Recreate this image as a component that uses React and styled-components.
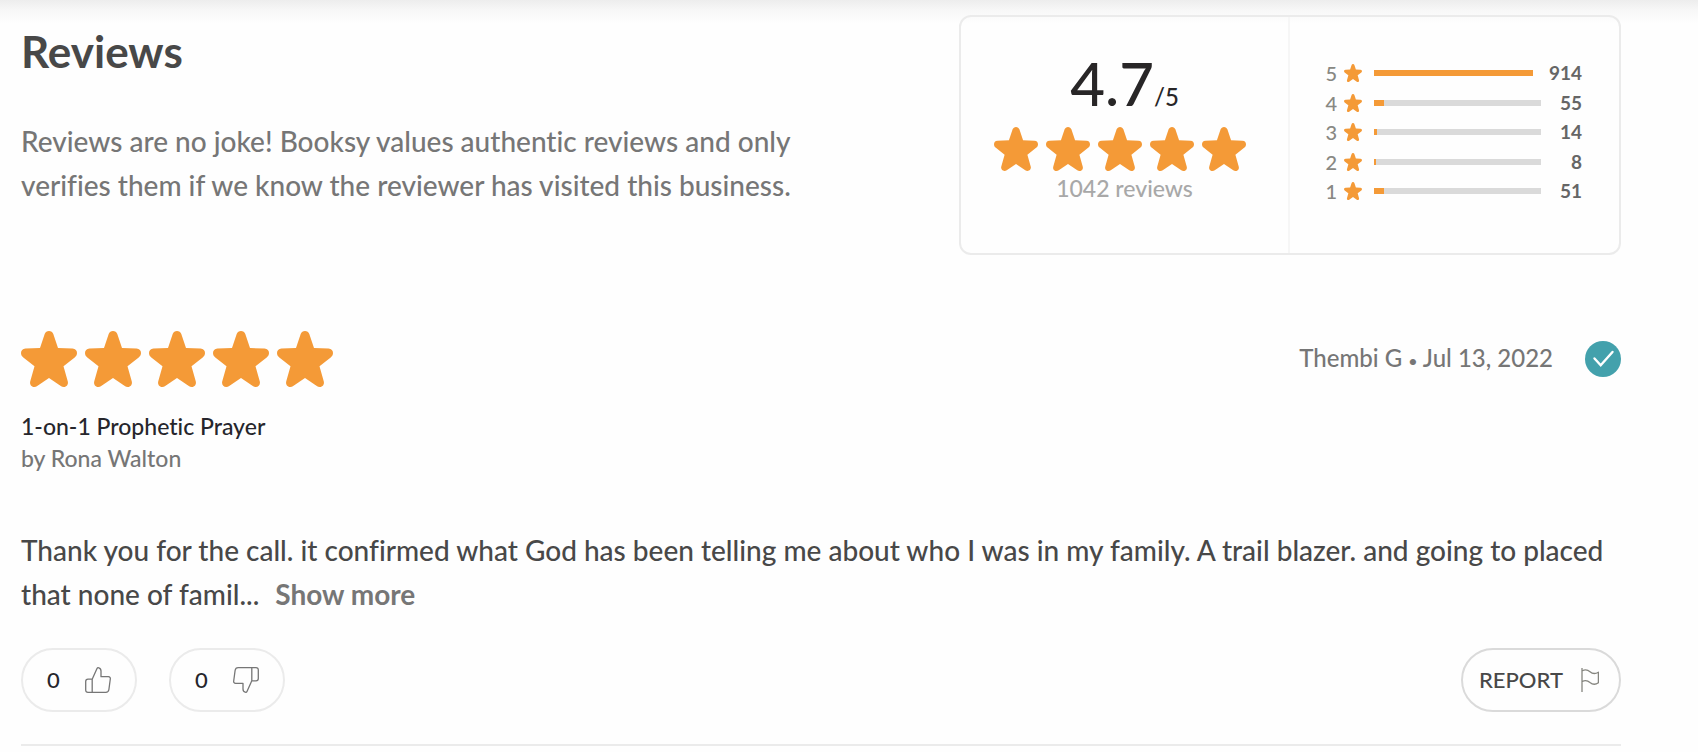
import React from 'react';
import styled, { createGlobalStyle } from 'styled-components';

const GlobalStyle = createGlobalStyle`
  * {
    box-sizing: border-box;
  }
  body {
    margin: 0;
    background: #fefefe;
    font-family: Lato, "Open Sans", sans-serif;
    font-weight: 500;
    font-variant-ligatures: none;
    color: #484848;
  }
  h2, p, ul {
    margin: 0;
    padding: 0;
  }
  button {
    font-family: inherit;
    cursor: pointer;
  }
`;

const Page = styled.main`
  background: linear-gradient(#ededed, #f8f8f8 45%, #fefefe) no-repeat;
  background-size: 100% 24px;
  padding: 15px 77px 0 21px;
`;

const Top = styled.header`
  display: flex;
  justify-content: space-between;
  align-items: flex-start;
  gap: 80px;
`;

const Intro = styled.div`
  flex: 1;
  padding-top: 10px;
  max-width: 820px;
`;

const Title = styled.h2`
  font-size: 44px;
  line-height: 52px;
  font-weight: 700;
  color: #484848;
`;

const Text = styled.p`
  font-size: 28px;
  line-height: 44px;
  color: ${({ $muted }) => ($muted ? '#767676' : '#484848')};
`;

const IntroText = styled(Text)`
  margin-top: 42px;
`;

const Summary = styled.section`
  display: flex;
  flex: 0 0 662px;
  height: 240px;
  border: 2px solid #ebebeb;
  border-radius: 12px;
`;

const Score = styled.div`
  width: 50%;
  display: flex;
  flex-direction: column;
  align-items: center;
  padding-top: 30px;
  border-right: 2px solid #f6f6f6;
`;

const Average = styled.p`
  font-size: 60px;
  line-height: 72px;
  font-weight: 500;
  color: #282627;
  small {
    font-size: 24px;
    line-height: 28px;
  }
`;

const Stars = styled.div`
  display: flex;
  padding-right: ${({ $padded }) => ($padded ? '10px' : '0')};
  margin-top: ${({ $padded }) => ($padded ? '8px' : '0')};
  gap: 8px;
`;

const Total = styled.p`
  font-size: 23px;
  line-height: 32px;
  margin-top: 1px;
  color: #a8a8a8;
`;

const Breakdown = styled.ul`
  width: 50%;
  list-style: none;
  display: flex;
  flex-direction: column;
  justify-content: space-between;
  height: 140px;
  margin-top: 45px;
  padding: 0 37px 0 35px;
`;

const Row = styled.li`
  display: flex;
  align-items: center;
  height: 22px;
  font-size: 20px;
  line-height: 22px;
  color: #888883;
  svg {
    margin: 0 12px 0 7px;
  }
  strong {
    min-width: 25px;
    margin-left: 16px;
    font-size: 19px;
    text-align: right;
    font-weight: 700;
    color: #666;
  }
`;

const Label = styled.span`
  width: 12px;
  text-align: right;
`;

const Track = styled.div`
  flex: 1;
  height: 6px;
  background: #dadada;
`;

const Fill = styled.div`
  height: 100%;
  background: #f49a37;
`;

const Review = styled.article`
  margin-top: 76px;
  padding-bottom: 32px;
  border-bottom: 2px solid #ebebeb;
`;

const ReviewTop = styled.div`
  display: flex;
  justify-content: space-between;
  align-items: center;
`;

const Author = styled.div`
  display: flex;
  align-items: center;
  gap: 32px;
  font-size: 24px;
  line-height: 32px;
  color: #767676;
  small {
    font-size: 16px;
  }
`;

const Service = styled.p`
  font-size: 23px;
  line-height: 32px;
  color: ${({ $muted }) => ($muted ? '#767676' : '#26262c')};
`;

const Services = styled.div`
  margin: 23px 0 54px;
`;

const ShowMore = styled.button`
  margin-left: 16px;
  padding: 0;
  border: 0;
  background: none;
  font-size: 28px;
  line-height: 32px;
  font-weight: 700;
  color: #767676;
`;

const Actions = styled.div`
  display: flex;
  gap: 32px;
  margin-top: 32px;
`;

const Pill = styled.button`
  display: flex;
  align-items: center;
  justify-content: space-between;
  width: 116px;
  height: 64px;
  padding: 0 24px;
  border: 2px solid #ebebeb;
  border-radius: 32px;
  background: #fefefe;
  font-size: 22px;
  line-height: 28px;
  font-weight: 500;
  color: #26262c;
`;

const ReportPill = styled(Pill)`
  width: 160px;
  padding: 0 20px 0 16px;
  margin-left: auto;
  border-color: #dadada;
  color: #484848;
`;

const Star = ({ size }) => (
  <svg width={size} height={size} viewBox="0 0 56 56" fill="#f49a37" aria-hidden="true">
    <path d="M28 0C30 0 31.6 1.2 32.3 3L37 17L51.5 17.6C54.5 17.8 56 19.6 56 22C56 23.8 55.2 25.2 54 26.2L42.5 35.3L46.8 50.5C47.5 53.5 45.5 56 42.8 56C41.6 56 40.6 55.6 39.8 55L28 47L16.2 55C15.4 55.6 14.4 56 13.2 56C10.5 56 8.5 53.5 9.2 50.5L13.5 35.3L2 26.2C.8 25.2 0 23.8 0 22C0 19.6 1.5 17.8 4.5 17.6L19 17L23.7 3C24.4 1.2 26 0 28 0Z" />
  </svg>
);

const StarRow = ({ size, padded }) => (
  <Stars $padded={padded} role="img" aria-label="5 stars">
    {[1, 2, 3, 4, 5].map((n) => <Star key={n} size={size} />)}
  </Stars>
);

const Thumb = ({ down }) => (
  <svg width="26" height="26" viewBox="0 0 26 26" fill="none" stroke="#767676" strokeWidth="1.3" strokeLinejoin="round" aria-hidden="true">
    <g transform={down ? 'rotate(180 13 13)' : undefined}>
      <path d="M7.2 12.2L12 1.6C12.4.7 13.1.6 13.8.8C15.2 1.2 16 2.4 16 4V9.7H23.4C24.8 9.7 25.5 10.6 25.3 12L23.9 22.5C23.6 24.4 22.7 25.3 20.8 25.3H3C1.5 25.3.7 24.5.7 23V14.5C.7 13 1.5 12.2 3 12.2H7.2V25.3" />
    </g>
  </svg>
);

const Flag = () => (
  <svg width="18" height="24" viewBox="0 0 18 24" fill="none" stroke="#85857f" strokeWidth="1.3" strokeLinejoin="round" aria-hidden="true">
    <path d="M1 0V24M1 3C3.5 1.6 6.5 1.6 9 3.7C11.5 6 14.5 6 17.4 4.2V14.7C14.5 16.8 11.5 16.6 9 14.5C6.5 12.3 3.5 12.2 1 13.7" />
  </svg>
);

const Check = () => (
  <svg width="36" height="36" viewBox="0 0 36 36" fill="none" role="img" aria-label="Verified">
    <circle cx="18" cy="18" r="18" fill="#43a1ac" />
    <path d="M9.5 17.5L15.7 24.2L27.5 11" stroke="#fff" strokeWidth="2.4" strokeLinecap="round" />
  </svg>
);

const ratings = [
  { stars: 5, count: 914 },
  { stars: 4, count: 55 },
  { stars: 3, count: 14 },
  { stars: 2, count: 8 },
  { stars: 1, count: 51 },
];
const highest = 914;

const App = () => {
  return (
    <>
      <GlobalStyle />
      <Page>
        <Top>
          <Intro>
            <Title>Reviews</Title>
            <IntroText $muted>
              Reviews are no joke! Booksy values authentic reviews and only verifies them if we know the reviewer has visited this business.
            </IntroText>
          </Intro>
          <Summary>
            <Score>
              <Average>4.7<small>/5</small></Average>
              <StarRow size={44} padded />
              <Total>1042 reviews</Total>
            </Score>
            <Breakdown>
              {ratings.map(({ stars, count }) => (
                <Row key={stars}>
                  <Label>{stars}</Label>
                  <Star size={18} />
                  <Track>
                    <Fill style={{ width: `${Math.round((count / highest) * 100)}%` }} />
                  </Track>
                  <strong>{count}</strong>
                </Row>
              ))}
            </Breakdown>
          </Summary>
        </Top>

        <Review>
          <ReviewTop>
            <StarRow size={56} />
            <Author>
              <span>Thembi G <small>•</small> Jul 13, 2022</span>
              <Check />
            </Author>
          </ReviewTop>
          <Services>
            <Service>1-on-1 Prophetic Prayer</Service>
            <Service $muted>by Rona Walton</Service>
          </Services>
          <Text>
            Thank you for the call. it confirmed what God has been telling me about who I was in my family. A trail blazer. and going to placed that none of famil...
            <ShowMore type="button">Show more</ShowMore>
          </Text>
          <Actions>
            <Pill type="button" aria-label="Helpful, 0">0 <Thumb /></Pill>
            <Pill type="button" aria-label="Not helpful, 0">0 <Thumb down /></Pill>
            <ReportPill type="button">REPORT <Flag /></ReportPill>
          </Actions>
        </Review>
      </Page>
    </>
  );
};

export default App;
